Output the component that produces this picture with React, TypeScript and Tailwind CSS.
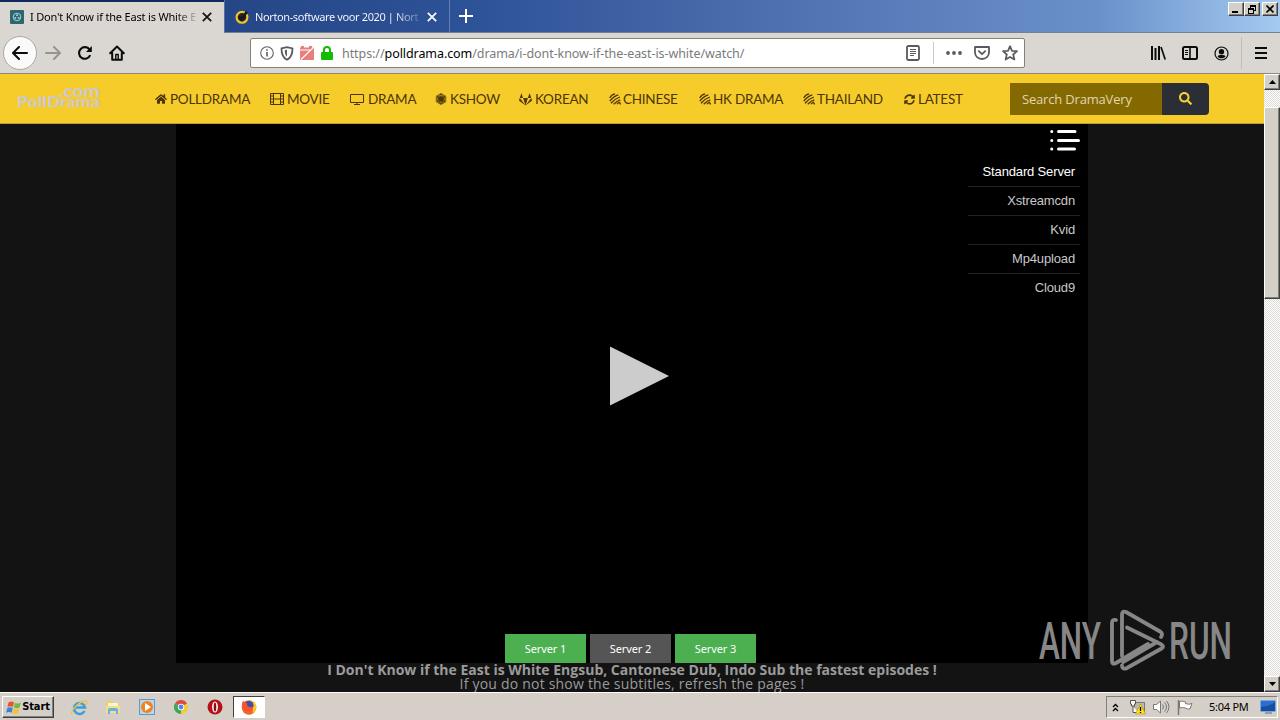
import { ReactNode } from "react";
import { FaFirstOrder, FaGitlab, FaHome, FaSearch, FaSyncAlt } from "react-icons/fa";

function FilmIcon() {
  return (
    <svg className="h-[12px] w-[14px]" viewBox="0 0 14 12" fill="none" stroke="currentColor">
      <path d="M.5.5h13v11H.5zM3.5.5v11M10.5.5v11M3.5 6h7M.5 3h3M.5 6h3M.5 9h3M10.5 3h3M10.5 6h3M10.5 9h3" />
    </svg>
  );
}

function TvIcon() {
  return (
    <svg className="h-[12px] w-[14px]" viewBox="0 0 14 12" fill="none" stroke="currentColor">
      <path d="M.5 1.5h13v8H.5zM7 9.5v2M4 11.5h6" />
    </svg>
  );
}

function StripesIcon() {
  return (
    <svg className="h-[12px] w-[12px]" viewBox="0 0 12 12" fill="none" stroke="currentColor" strokeWidth="1.3">
      <path d="M.8 5C1.800 2.800 3.600 1.300 6 .9M.8 8C3.200 5.300 5.800 2.800 9.300 1.900M2 10.200C4.600 7.400 7.300 5.200 10.900 4M4.700 11.200C6.600 9.200 8.600 7.600 11.300 6.800M8 11.200c.7-.9 1.500-1.500 2.600-1.800l1 2" />
    </svg>
  );
}

const nav: { label: string; icon: ReactNode; item: string; box: string }[] = [
  { label: "POLLDRAMA", icon: <FaHome size={12} />, item: "w-[115px]", box: "w-[15px]" },
  { label: "MOVIE", icon: <FilmIcon />, item: "w-[80px]", box: "w-[17px]" },
  { label: "DRAMA", icon: <TvIcon />, item: "w-[85px]", box: "w-[18px]" },
  { label: "KSHOW", icon: <FaFirstOrder size={12} />, item: "w-[84px]", box: "w-[15px]" },
  { label: "KOREAN", icon: <FaGitlab size={13} />, item: "w-[90px]", box: "w-[16px]" },
  { label: "CHINESE", icon: <StripesIcon />, item: "w-[90px]", box: "w-[14px]" },
  { label: "HK DRAMA", icon: <StripesIcon />, item: "w-[104px]", box: "w-[14px]" },
  { label: "THAILAND", icon: <StripesIcon />, item: "w-[101px]", box: "w-[14px]" },
  { label: "LATEST", icon: <FaSyncAlt size={11} />, item: "w-[60px]", box: "w-[14px]" },
];

const sources = ["Standard Server", "Xstreamcdn", "Kvid", "Mp4upload", "Cloud9"];

function WinButton({ children, className = "" }: { children: ReactNode; className?: string }) {
  return (
    <div
      className={`flex items-center justify-center border border-t-white border-l-white border-r-[#404040] border-b-[#404040] bg-[#d4d0c8] shadow-[inset_-1px_-1px_0_#808080] ${className}`}
    >
      {children}
    </div>
  );
}

function TabBar() {
  return (
    <div className="flex h-[33px] bg-[linear-gradient(90deg,#173478_0px,#254787_230px,#2e5297_470px,#4568a9_700px,#5b7dbb_900px,#6a91ca_1100px,#a4caf1_1280px)]">
      <div className="flex w-[224px] shrink-0 flex-col">
        <div className="h-[2px] bg-[#12295f]" />
        <div className="flex flex-1 items-center bg-[#dad7d2] pb-[1px] pl-[10px] text-black">
          <svg className="h-[14px] w-[14px] shrink-0" viewBox="0 0 14 14">
            <rect width="14" height="14" rx="1" fill="#2f6570" />
            <circle cx="7" cy="7" r="3.8" fill="none" stroke="#9fd4dc" />
            <circle cx="7" cy="5.2" r="1" fill="#9fd4dc" />
            <circle cx="5.3" cy="8" r="1" fill="#9fd4dc" />
            <circle cx="8.7" cy="8" r="1" fill="#9fd4dc" />
          </svg>
          <span className="ml-[6px] w-[166px] shrink-0 overflow-hidden whitespace-nowrap bg-[linear-gradient(90deg,#000_145px,#00000000_170px)] bg-clip-text font-['Noto_Sans',sans-serif] text-[11px] tracking-[-0.180px] text-transparent">
            I Don't Know if the East is White E
          </span>
          <svg className="ml-[6px] h-[10px] w-[10px]" viewBox="0 0 10 10" stroke="#111" strokeWidth="1.7">
            <path d="M.8.8l8.4 8.4M9.2.8L.8 9.2" />
          </svg>
        </div>
      </div>
      <div className="flex w-[226px] shrink-0 items-center border-r border-b border-l border-r-[#6682b5] border-b-[#74828f] border-l-[#5570a5] pt-[2px] pl-[10px]">
        <svg className="h-[14px] w-[14px] shrink-0" viewBox="0 0 14 14" fill="none">
          <circle cx="7" cy="7.3" r="5.4" fill="#262626" stroke="#f0c629" strokeWidth="2.2" />
          <path d="M4 6.5l2.6 3L11.8 1.8" stroke="#17181c" strokeWidth="2.6" />
        </svg>
        <span className="ml-[6px] w-[164px] shrink-0 overflow-hidden whitespace-nowrap bg-[linear-gradient(90deg,#fff_138px,#ffffff00_172px)] bg-clip-text font-['Noto_Sans',sans-serif] text-[11px] tracking-[-0.380px] text-transparent">
          Norton-software voor 2020 | Nort
        </span>
        <svg className="ml-[8px] h-[10px] w-[10px]" viewBox="0 0 10 10" stroke="#fff" strokeWidth="1.7">
          <path d="M.8.8l8.4 8.4M9.2.8L.8 9.2" />
        </svg>
      </div>
      <div className="flex flex-1 items-start justify-between border-b border-[#74828f] pt-[2px] pr-[2px] pl-[9px]">
        <svg className="mt-[7px] h-[14px] w-[14px]" viewBox="0 0 14 14" stroke="#fff" strokeWidth="2">
          <path d="M7 0v14M0 7h14" />
        </svg>
        <div className="flex">
          <WinButton className="h-[14px] w-[16px]">
            <span className="mt-[6px] mr-[2px] h-[2px] w-[6px] bg-black" />
          </WinButton>
          <WinButton className="h-[14px] w-[16px]">
            <svg className="h-[9px] w-[9px]" viewBox="0 0 9 9" fill="none" stroke="#000" shapeRendering="crispEdges">
              <path d="M2.5 3V.5h5v5H6M2 1.5h6M.5 3.5h5v5h-5zM0 4.5h6" />
            </svg>
          </WinButton>
          <WinButton className="ml-[2px] h-[14px] w-[16px]">
            <svg className="h-[8px] w-[8px]" viewBox="0 0 8 8" stroke="#000" strokeWidth="1.6">
              <path d="M.5.5l7 7M7.5.5l-7 7" />
            </svg>
          </WinButton>
        </div>
      </div>
    </div>
  );
}

function Toolbar() {
  return (
    <div className="flex h-[41px] items-center border-b border-[#8b877c] bg-[#dad7d2] pl-[3px]">
      <div className="flex h-[34px] w-[34px] shrink-0 items-center justify-center rounded-full border border-[#aaa8a3] bg-[#fafafa]">
        <svg className="h-[14px] w-[16px]" viewBox="0 0 16 14" fill="none" stroke="#0c0c0d" strokeWidth="2" strokeLinecap="round" strokeLinejoin="round">
          <path d="M15 7H1.5M7 1L1 7l6 6" />
        </svg>
      </div>
      <svg className="ml-[8px] h-[14px] w-[16px]" viewBox="0 0 16 14" fill="none" stroke="#96948f" strokeWidth="2" strokeLinecap="round" strokeLinejoin="round">
        <path d="M1 7h13.5M9 1l6 6-6 6" />
      </svg>
      <svg className="ml-[16px] h-[16px] w-[16px]" viewBox="0 0 16 16" fill="none" stroke="#0c0c0d" strokeWidth="2.1">
        <path d="M13.2 10.2a5.8 5.8 0 1 1-.6-5.6" />
        <path d="M14.8 1v6H9z" fill="#0c0c0d" stroke="none" />
      </svg>
      <svg className="ml-[16px] h-[16px] w-[16px]" viewBox="0 0 16 16" fill="none" stroke="#0c0c0d" strokeWidth="2" strokeLinejoin="round" strokeLinecap="round">
        <path d="M1.2 8.3L8 1.5l6.8 6.8M3.2 8v6.8h9.6V8" />
        <path d="M6.8 14.5V9.5h2.4v5" strokeWidth="1.4" />
      </svg>
      <div className="ml-[125px] flex h-[30px] w-[775px] shrink-0 items-center rounded-[2px] border border-[#85827a] bg-white pl-[9px]">
        <svg className="h-[14px] w-[14px] shrink-0" viewBox="0 0 14 14" fill="none" stroke="#606063" strokeWidth="1.1">
          <circle cx="7" cy="7" r="6.3" />
          <path d="M7 6v4.6M7 3.2v1.5" strokeWidth="1.6" />
        </svg>
        <svg className="ml-[6px] h-[15px] w-[14px] shrink-0" viewBox="0 0 14 15">
          <path d="M1.500 2.400L7 1.200l5.500 1.200c0 5-.8 9-5.500 11.400C2.300 11.400 1.500 7.400 1.500 2.400z" fill="none" stroke="#5a5a5e" strokeWidth="1.8" />
          <path d="M7 3.800v7C5.300 9.500 4.800 7 4.800 4.300z" fill="#5a5a5e" />
        </svg>
        <svg className="ml-[6px] h-[14px] w-[14px] shrink-0" viewBox="0 0 14 14">
          <path d="M0 1.500h1V0h3v1.500h5V0h3v1.500h2V14H0z" fill="#e87f7c" />
          <path d="M0 4h10M1 13.500L14 1" stroke="#fff" strokeWidth="1.200" />
        </svg>
        <svg className="ml-[7px] h-[14px] w-[12px] shrink-0" viewBox="0 0 12 14">
          <path d="M3 7V4a3 3 0 0 1 6 0v3" fill="none" stroke="#12bc00" strokeWidth="2" />
          <rect y="6" width="12" height="8" rx="1" fill="#12bc00" />
        </svg>
        <span className="ml-[9px] w-[560px] pt-[2px] whitespace-nowrap font-['Noto_Sans',sans-serif] text-[12.500px] tracking-[-0.070px] text-[#7b7b7b]">
          https://<span className="text-black">polldrama.com</span>/drama/i-dont-know-if-the-east-is-white/watch/
        </span>
        <svg className="ml-[4px] h-[16px] w-[14px] shrink-0" viewBox="0 0 14 16" fill="none" stroke="#5a5a5e">
          <rect x="1" y="1" width="12" height="14" rx="1.500" strokeWidth="1.800" />
          <path d="M4 4.500h6M4 6.500h6M4 8.500h6M4 10.500h4" />
        </svg>
        <div className="ml-[13px] h-[22px] w-px bg-[#c9c9c9]" />
        <svg className="ml-[12px] h-[4px] w-[16px] shrink-0" viewBox="0 0 16 4" fill="#5a5a5e">
          <circle cx="2" cy="2" r="1.900" />
          <circle cx="8" cy="2" r="1.900" />
          <circle cx="14" cy="2" r="1.900" />
        </svg>
        <svg className="ml-[12px] h-[14px] w-[16px] shrink-0" viewBox="0 0 16 14" fill="none" stroke="#5a5a5e" strokeWidth="1.800" strokeLinejoin="round" strokeLinecap="round">
          <path d="M1 1h14v5.500a7 6.500 0 0 1-14 0z" />
          <path d="M4.800 5.200L8 8.200l3.200-3" />
        </svg>
        <svg className="ml-[12px] h-[16px] w-[16px] shrink-0" viewBox="0 0 16 16" fill="none" stroke="#5a5a5e" strokeWidth="1.700" strokeLinejoin="round">
          <path d="M8 1.200l2 4.600 5 .4-3.800 3.300 1.200 5L8 11.900l-4.400 2.600 1.200-5L1 6.200l5-.4z" />
        </svg>
      </div>
      <svg className="ml-[125px] h-[14px] w-[16px] shrink-0" viewBox="0 0 16 14" stroke="#0c0c0d" strokeWidth="2">
        <path d="M2 0v14M5.500 2v12M9 0v14" />
        <path d="M11 1l4.200 12.500" strokeWidth="1.700" />
      </svg>
      <svg className="ml-[16px] h-[14px] w-[16px] shrink-0" viewBox="0 0 16 14" fill="none" stroke="#0c0c0d">
        <rect x="1" y="1" width="14" height="12" rx="1.500" strokeWidth="2" />
        <path d="M8 1v12" strokeWidth="1.600" />
        <path d="M3 4.500h3M3 6.500h3M3 8.500h3" />
      </svg>
      <svg className="ml-[16px] h-[15px] w-[15px] shrink-0" viewBox="0 0 15 15" fill="#0c0c0d">
        <circle cx="7.500" cy="7.500" r="6.500" fill="none" stroke="#0c0c0d" strokeWidth="1.200" />
        <circle cx="7.500" cy="5.700" r="2.700" />
        <path d="M3.500 10.200c1-1.200 2-1.200 4-1.200s3 0 4 1.200c-1 1.500-2 2-4 2s-3-.5-4-2z" />
      </svg>
      <div className="ml-[12px] h-[32px] w-px bg-[#c3c0ba]" />
      <svg className="ml-[13px] h-[12px] w-[12px]" viewBox="0 0 12 12" stroke="#0c0c0d" strokeWidth="2">
        <path d="M0 1h12M0 6h12M0 11h12" />
      </svg>
    </div>
  );
}

function SiteHeader() {
  return (
    <header className="flex h-[50px] items-center border-b border-[#b79f3d] bg-[#f6cc2b] pl-[16px] text-[#4c3508]">
      <svg className="h-[26px] w-[85px] shrink-0" viewBox="0 0 85 26" fill="#cdc8ca" fontFamily="Lato, sans-serif" fontWeight="900">
        <text x="43" y="11" fontSize="16" textLength="41" lengthAdjust="spacingAndGlyphs">.com</text>
        <text x="1" y="21" fontSize="14.5" textLength="83" lengthAdjust="spacingAndGlyphs">PollDrama</text>
      </svg>
      <nav className="ml-[54px] flex w-[809px] shrink-0 font-['Lato',sans-serif] text-[13.500px] tracking-[-0.250px]">
        {nav.map((n) => (
          <a key={n.label} className={`flex shrink-0 items-center whitespace-nowrap ${n.item}`}>
            <span className={`mt-[1px] shrink-0 ${n.box}`}>{n.icon}</span>
            <span className="pt-[2px]">{n.label}</span>
          </a>
        ))}
      </nav>
      <div className="ml-[46px] flex h-[32px] w-[199px] overflow-hidden rounded-r-[4px]">
        <div className="flex w-[152px] items-center bg-[#846900] pt-[2px] pl-[12px] font-['Open_Sans',sans-serif] text-[13px] tracking-[-0.180px] whitespace-nowrap text-[#e0d6b2]">
          Search DramaVery
        </div>
        <div className="flex flex-1 items-center justify-center bg-[#2b2f35] text-[#f3d12f]">
          <FaSearch size={13} />
        </div>
      </div>
    </header>
  );
}

function Player() {
  return (
    <div className="relative mx-auto flex h-[539px] w-[912px] flex-col bg-black">
      <div className="mt-[5px] mr-[8px] flex w-[112px] flex-col items-end self-end">
        <svg className="h-[23px] w-[30px]" viewBox="0 0 30 23" stroke="#fff" strokeWidth="3" strokeLinecap="round">
          <path d="M1.700 2.500h.1M1.700 11.500h.1M1.700 20h.1M8.500 2.500h16.500M8.500 11.500h20M8.500 20h16" />
        </svg>
        <ul className="mt-[6px] w-full text-right font-['Liberation_Sans',sans-serif] text-[13px] tracking-[-0.150px]">
          {sources.map((s, i) => (
            <li
              key={s}
              className={`h-[29px] pr-[5px] leading-[28px] ${i === 0 ? "text-white" : "text-[#c8c8c8]"} ${
                i < sources.length - 1 ? "border-b border-[#222]" : ""
              }`}
            >
              {s}
            </li>
          ))}
        </ul>
      </div>
      <svg className="absolute top-[222px] left-[433px] h-[60px] w-[60px]" viewBox="0 0 60 60">
        <path d="M1 0.500L60 30 1 59.500z" fill="#ccc" />
      </svg>
      <div className="mt-auto flex gap-[4px] pl-[329px] font-['Noto_Sans',sans-serif] text-[11px] tracking-[-0.100px] text-white">
        <button className="h-[29px] w-[81px] bg-[#4caf50] pt-[1px]">Server 1</button>
        <button className="h-[29px] w-[81px] bg-[#555] pt-[1px]">Server 2</button>
        <button className="h-[29px] w-[81px] bg-[#4caf50] pt-[1px]">Server 3</button>
      </div>
    </div>
  );
}

function Watermark() {
  return (
    <svg className="absolute top-[484px] left-[1036px] h-[64px] w-[200px]" viewBox="0 0 200 64">
      <g fill="#878787" fontFamily="Roboto, sans-serif" fontSize="51" fontWeight="500">
        <text x="3" y="51" textLength="62" lengthAdjust="spacingAndGlyphs">ANY</text>
        <text x="133" y="51" textLength="63" lengthAdjust="spacingAndGlyphs">RUN</text>
      </g>
      <g fill="none" stroke="#878787" strokeWidth="3.800" strokeLinejoin="round" strokeLinecap="round">
        <path d="M86 48V6.500q0-4 4-2.500L124 23.500q3.500 2 1 5.500M91 19.500l34.500 17q3 2 0 4L90 60.500q-4 1-4-3M87 54l34-20" />
        <path d="M80 12q-4-1-4 3v38q0 4 4 2l32-19" />
      </g>
    </svg>
  );
}

function ScrollBar() {
  return (
    <div className="flex h-[618px] w-[16px] shrink-0 flex-col bg-[#f1efec] bg-[conic-gradient(#fff_25%,#dedad5_0_50%,#fff_0_75%,#dedad5_0)] bg-[length:2px_2px]">
      <WinButton className="h-[16px] w-[16px]">
        <svg className="h-[4px] w-[7px]" viewBox="0 0 7 4"><path d="M3.500 0L7 4H0z" /></svg>
      </WinButton>
      <WinButton className="mt-[17px] h-[192px] w-[16px]">{null}</WinButton>
      <WinButton className="mt-auto h-[16px] w-[16px]">
        <svg className="h-[4px] w-[7px]" viewBox="0 0 7 4"><path d="M0 0h7L3.500 4z" /></svg>
      </WinButton>
    </div>
  );
}

function Taskbar() {
  return (
    <footer className="flex h-[28px] items-start border-t border-[#fffdf8] bg-[#d6cfc7] pt-[3px] pl-[2px] text-black">
      <WinButton className="h-[22px] w-[52px]">
        <svg className="h-[15px] w-[16px] shrink-0" viewBox="0 0 16 15">
          <path d="M2.500 2.500q3-2 5.500-.3L7 7Q4.500 5.500 1.500 7z" fill="#e8552b" />
          <path d="M9 2.700q3 1.500 6-.2L13.500 7.500q-3 1.500-5.500-.1z" fill="#73b944" />
          <path d="M1.300 8q3-1.500 5.500 0l-1.200 4.700q-2.500-1.500-5.500 0z" fill="#3b83d3" />
          <path d="M7.800 8.500q2.700 1.500 5.500 0L12 13.300q-2.800 1.500-5.500 0z" fill="#f7c22c" />
        </svg>
        <span className="pt-[1px] font-['DejaVu_Sans_Condensed','DejaVu_Sans',sans-serif] text-[11px] font-bold tracking-[-0.100px]">Start</span>
      </WinButton>
      <div className="ml-[17px] flex h-[22px] items-center">
        <svg className="h-[17px] w-[17px]" viewBox="0 0 17 16" fill="none">
          <path d="M13.500 11.500A5.500 5.500 0 1 1 14 8H4.500" stroke="#3e9ed9" strokeWidth="2.500" />
          <path d="M1 14.500C-1 11 9 1 15 1.500c2 .5 0 4-.5 4.500" stroke="#ecc24c" strokeWidth="1.300" />
        </svg>
        <svg className="ml-[17px] h-[16px] w-[16px]" viewBox="0 0 16 16">
          <path d="M1 3l1-1h5l1 1.500h6V14H1z" fill="#e9cf72" />
          <path d="M3 4h10v5H3z" fill="#fbf5d4" />
          <path d="M1 7h14v7H1z" fill="#f5dd88" />
          <path d="M3 15v-4q0-2 2-2h6q2 0 2 2v4h-2v-3H5v3z" fill="#66b3df" />
        </svg>
        <svg className="ml-[18px] h-[16px] w-[16px]" viewBox="0 0 16 16">
          <rect x=".5" y=".5" width="15" height="15" fill="#b7d7f1" stroke="#6198cc" />
          <circle cx="8" cy="8" r="6" fill="#f0841c" />
          <path d="M6 4l6 4-6 4z" fill="#fff" />
        </svg>
        <svg className="ml-[19px] h-[14px] w-[14px]" viewBox="0 0 14 14">
          <path d="M7 7L.9 3.500A7 7 0 0 1 13.100 3.500z" fill="#dd4b3e" />
          <path d="M7 7l6.100-3.500A7 7 0 0 1 7 14z" fill="#f6ca33" />
          <path d="M7 7v7A7 7 0 0 1 .9 3.500z" fill="#3fa558" />
          <circle cx="7" cy="7" r="3.200" fill="#fff" />
          <circle cx="7" cy="7" r="2.400" fill="#4b88e9" />
        </svg>
        <svg className="ml-[19px] h-[16px] w-[16px]" viewBox="0 0 16 16">
          <circle cx="8" cy="8" r="7.500" fill="#b41118" />
          <ellipse cx="8" cy="8" rx="2.900" ry="5.500" fill="#fff" />
          <ellipse cx="8" cy="8" rx="1.300" ry="4.500" fill="#8c0d13" />
        </svg>
        <div className="ml-[10px] flex h-[22px] w-[32px] items-center justify-center border border-t-[#404040] border-l-[#404040] border-r-white border-b-white bg-white">
          <svg className="h-[16px] w-[16px]" viewBox="0 0 16 16">
            <circle cx="8" cy="8.500" r="7.300" fill="#f16529" />
            <path d="M8 1q7 1 7.500 7-1 5-4 6.500Q13 8 8 1z" fill="#ffc928" />
            <circle cx="8" cy="6.500" r="4.600" fill="#3951aa" />
            <path d="M1 6Q1 2.500 2.500 2q2 2 4 2.500Q5 6 8 8q3 .5 4-1 0 5-4.500 5.500Q1.500 12 1 6z" fill="#f5542e" />
          </svg>
        </div>
      </div>
      <div className="ml-auto mr-[2px] flex h-[22px] w-[172px] items-center border border-t-[#808080] border-l-[#808080] border-r-white border-b-white pl-[5px]">
        <svg className="h-[9px] w-[7px]" viewBox="0 0 7 9" fill="none" stroke="#000" strokeWidth="1.300">
          <path d="M1 4l2.500-2.500L6 4M1 8l2.500-2.500L6 8" />
        </svg>
        <svg className="ml-[10px] h-[16px] w-[17px]" viewBox="0 0 17 16">
          <path d="M5 3.500h10.500v9H5z" fill="#b9b9b0" stroke="#777" />
          <path d="M1.500 1.500h5V5h-1v2h-3V5h-1zM4 7v6.500h5" fill="#fff" stroke="#555" />
          <path d="M11.500 5l5 10h-10z" fill="#ffdf20" stroke="#b39500" strokeWidth=".6" />
          <path d="M11.500 8v4M11.500 13v1" stroke="#000" strokeWidth="1.300" />
        </svg>
        <svg className="ml-[7px] h-[14px] w-[17px]" viewBox="0 0 17 14" fill="none" stroke="#777">
          <path d="M.5 4.500h3l4-3.500v12l-4-3.500h-3z" fill="#fff" />
          <path d="M9.500 4.500q2 2.500 0 5M11.500 2.500q4 4.500 0 9M13.500 1q5 6 0 12" />
        </svg>
        <svg className="ml-[7px] h-[15px] w-[16px]" viewBox="0 0 16 15" stroke="#777">
          <path d="M2.500 1.500q3-1 6 .5v1.500q3 1.500 6.500 0l-2 5.500q-3 .5-4.500-1-3-1-6 0z" fill="#fff" />
          <path d="M1.500 0v15" strokeWidth="1.500" />
        </svg>
        <span className="ml-[16px] whitespace-nowrap font-['Noto_Sans',sans-serif] text-[11px] tracking-[-0.250px]">5:04 PM</span>
        <svg className="mr-[1px] ml-auto h-[14px] w-[16px] shrink-0" viewBox="0 0 16 14">
          <rect x=".5" y=".5" width="15" height="11" rx="1" fill="#2c6fcd" stroke="#78a7df" />
          <path d="M1 7Q9 7 15 2v9H1z" fill="#194e9f" />
          <path d="M5 13h7" stroke="#516b8e" />
        </svg>
      </div>
    </footer>
  );
}

export default function App() {
  return (
    <div className="flex h-[720px] w-[1280px] flex-col overflow-hidden bg-[#dad7d2]">
      <TabBar />
      <Toolbar />
      <div className="flex h-[618px]">
        <div className="w-[1264px] bg-[#131313]">
          <SiteHeader />
          <main className="relative h-[568px] overflow-hidden">
            <Player />
            <div className="text-center font-['Open_Sans',sans-serif] text-[14px] leading-[14px] text-[#9b9b9b]">
              <p className="font-bold">I Don't Know if the East is White Engsub, Cantonese Dub, Indo Sub the fastest episodes !</p>
              <p className="tracking-[0.210px]">If you do not show the subtitles, refresh the pages !</p>
            </div>
            <Watermark />
          </main>
        </div>
        <ScrollBar />
      </div>
      <Taskbar />
    </div>
  );
}
